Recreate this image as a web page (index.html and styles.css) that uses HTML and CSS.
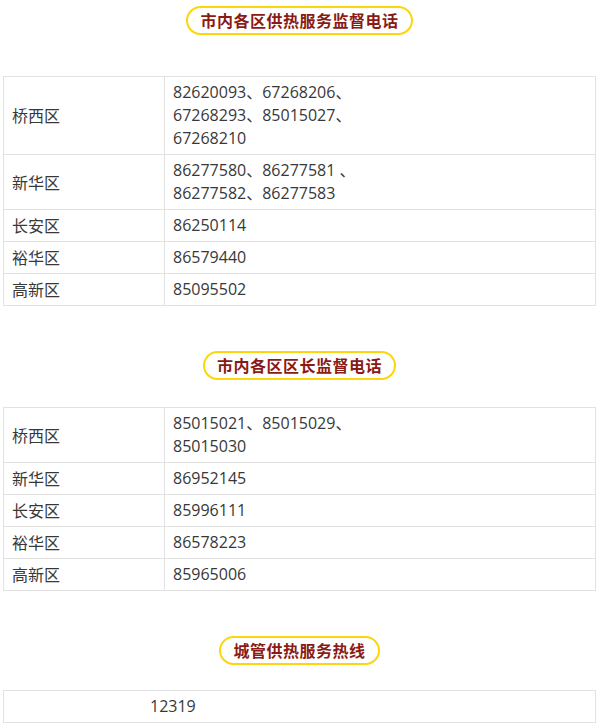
FILE: index.html
```
<!DOCTYPE html>
<html lang="zh-CN">
<head>
<meta charset="utf-8">
<title>供热服务监督电话</title>
<link rel="stylesheet" href="styles.css">
</head>
<body>
<div class="page">
  <div class="title-wrap first"><span class="badge">市内各区供热服务监督电话</span></div>
  <table class="phones">
    <tr><td class="area">桥西区</td><td class="num">82620093、67268206、<br>67268293、85015027、<br>67268210</td></tr>
    <tr><td class="area">新华区</td><td class="num">86277580、86277581 、<br>86277582、86277583</td></tr>
    <tr><td class="area">长安区</td><td class="num">86250114</td></tr>
    <tr><td class="area">裕华区</td><td class="num">86579440</td></tr>
    <tr><td class="area">高新区</td><td class="num">85095502</td></tr>
  </table>

  <div class="title-wrap second"><span class="badge">市内各区区长监督电话</span></div>
  <table class="phones">
    <tr><td class="area">桥西区</td><td class="num">85015021、85015029、<br>85015030</td></tr>
    <tr><td class="area">新华区</td><td class="num">86952145</td></tr>
    <tr><td class="area">长安区</td><td class="num">85996111</td></tr>
    <tr><td class="area">裕华区</td><td class="num">86578223</td></tr>
    <tr><td class="area">高新区</td><td class="num">85965006</td></tr>
  </table>

  <div class="title-wrap third"><span class="badge">城管供热服务热线</span></div>
  <table class="phones">
    <tr><td class="hotline">12319</td></tr>
  </table>
</div>
</body>
</html>
```
FILE: styles.css
```
html, body {
  margin: 0;
  padding: 0;
  background: #ffffff;
}

.page {
  width: 593px;
  margin-left: 3px;
  padding-top: 6px;
  font-family: "Open Sans", "Noto Sans CJK SC", sans-serif;
  color: #383838;
  font-size: 16px;
}

.title-wrap {
  display: flex;
  justify-content: center;
}

.title-wrap.first { margin-bottom: 41px; }
.title-wrap.second { margin-top: 45px; margin-bottom: 27px; }
.title-wrap.third { margin-top: 45px; margin-bottom: 25px; }

.badge {
  display: inline-block;
  border: 2px solid #fcd60a;
  border-radius: 16px;
  padding: 0 12px;
  height: 25px;
  line-height: 25px;
  font-family: "Noto Sans CJK SC", sans-serif;
  font-weight: 700;
  font-size: 16px;
  letter-spacing: 0.5px;
  color: #8a1a14;
}

.phones {
  width: 593px;
  border-collapse: collapse;
  table-layout: fixed;
}

.phones td {
  border: 1px solid #e2e2e2;
  padding: 4px 8px;
  line-height: 23px;
  vertical-align: middle;
}

.phones td.area {
  width: 144px;
  font-family: "Noto Sans CJK SC", sans-serif;
}

.phones td.hotline {
  padding-left: 146px;
}
```
